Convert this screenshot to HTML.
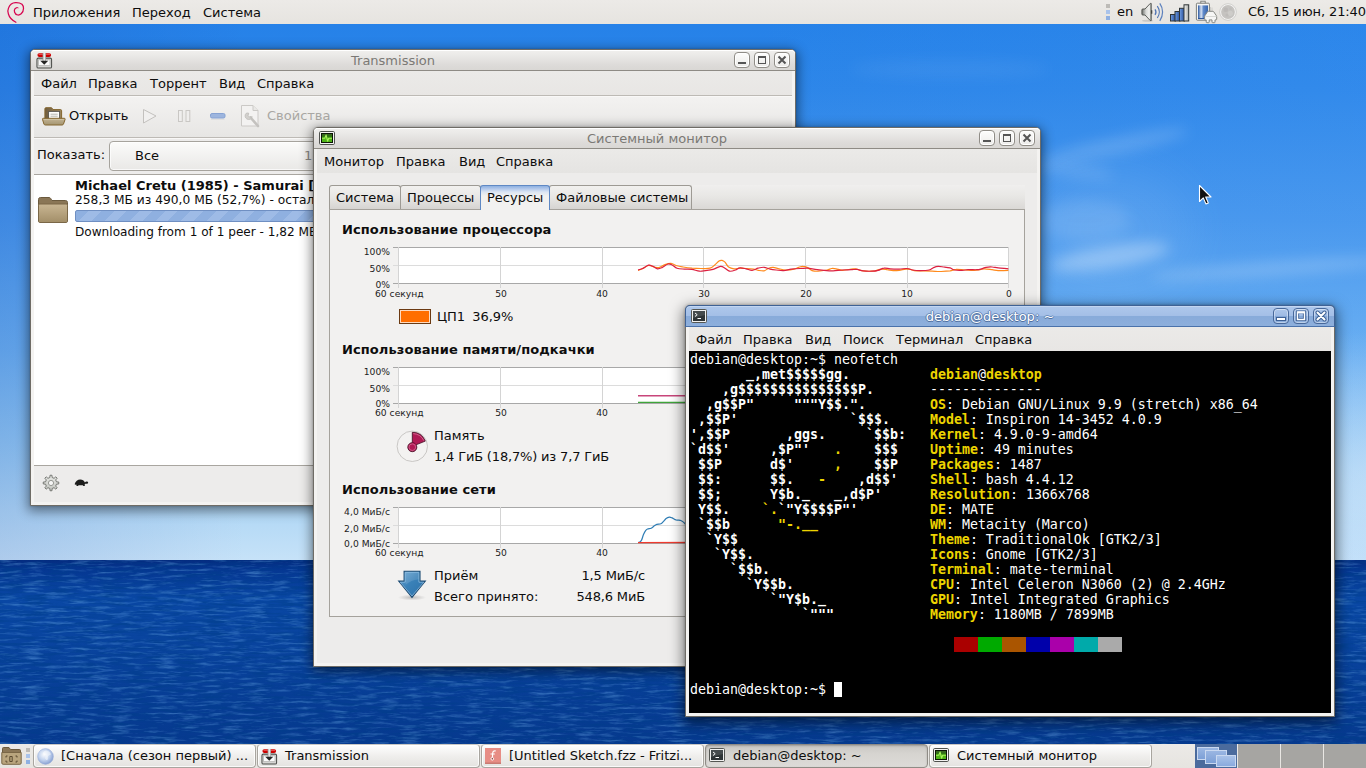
<!DOCTYPE html>
<html lang="ru">
<head>
<meta charset="utf-8">
<title>MATE Desktop</title>
<style>
*{box-sizing:border-box}
html,body{margin:0;padding:0;width:1366px;height:768px;overflow:hidden}
body{position:relative;font-family:"DejaVu Sans","Liberation Sans",sans-serif;font-size:13px;line-height:16px;color:#0d0d0d;background:#0c439e}
.abs,.abs>span,.abs>div,.abs>svg,.abs>pre,.tk>*,.ws>*,.tab>*,.wb>*{position:absolute}
#tt *{position:static}
#tt i{position:relative;top:-1px;font-style:normal}
.t{white-space:nowrap}
/* wallpaper */
#sky{left:0;top:0;width:1366px;height:560px;overflow:hidden;background:
 radial-gradient(ellipse 380px 150px at 1420px 480px,rgba(225,238,250,.55),rgba(225,238,250,0) 100%),
 linear-gradient(90deg,rgba(0,40,150,.12),rgba(0,40,150,0) 18%,rgba(90,170,255,0) 55%,rgba(90,170,255,.12) 100%),
 linear-gradient(180deg,#2380e8 0,#2d86e9 90px,#4796ec 220px,#6baff0 350px,#8fc5f2 440px,#b0d7f5 510px,#c6e2f8 560px)}
.cl{position:absolute;background:#fff;border-radius:50%;filter:blur(7px)}
#sea{left:0;top:560px;width:1366px;height:208px;background:
 linear-gradient(180deg,#042c80 0,#053792 10px,#0947a4 38px,#09449f 80px,#073d95 140px,#06378b 208px)}
#sea svg{position:absolute;left:0;top:0;opacity:.5}
/* panels */
.panel{left:0;width:1366px;height:24px;background:#e9e7e4}
#top{top:0;background:linear-gradient(180deg,#eceae7,#e6e4e0)}
#bottom{top:744px;background:linear-gradient(180deg,#eceae7,#e6e4e0)}
.pm{top:5px;white-space:nowrap}
/* windows */
.win{background:#edeceb;border:1px solid #6f6c66;border-radius:5px 5px 0 0;box-shadow:0 3px 12px 2px rgba(0,0,0,.46),0 0 2px rgba(0,0,0,.25)}
.win::after{content:"";position:absolute;left:0;top:21px;right:0;bottom:0;border:3px solid #f4f3f1;border-top:none}
.tbar{left:0;top:0;right:0;height:21px;border-radius:4px 4px 0 0;background:linear-gradient(180deg,#f1f0ee 0,#e8e7e5 35%,#dddbd9 75%,#d9d7d4 100%);border-bottom:1px solid #8e8b85;box-shadow:inset 0 1px 0 #fff}
.tbar.f{background:linear-gradient(180deg,#aec8ec 0,#a4bfe7 48%,#88abda 52%,#8dafdc 100%);box-shadow:inset 0 1px 0 #c3d6f1}
.win.f{box-shadow:0 4px 14px 2px rgba(0,0,0,.5),0 0 3px rgba(0,0,0,.3)}
.tbar.f{left:-1px;top:-1px;right:-1px;height:22px;border:1px solid #3f6295;border-bottom-color:#4a72ab;border-radius:5px 5px 0 0}
.ttl{left:26px;right:66px;top:3px;text-align:center;color:#7b7975;white-space:nowrap}
.tbar.f .ttl{color:#fff;text-shadow:0 1px 0 #4f6f9f,1px 0 0 #5d7fb0,-1px 0 0 #5d7fb0,0 -1px 0 #6d8fc0}
.wb{top:2px;width:16px;height:16px;border:1px solid #8f8c86;border-radius:4px;background:linear-gradient(180deg,#fdfdfc,#ecebe9);box-shadow:inset 0 0 0 1px #fff}
.tbar.f .wb{border-color:#48699b;background:linear-gradient(180deg,#adc7eb 0,#9fbbe4 48%,#84a7d8 52%,#8eb0dd 100%);box-shadow:inset 0 0 0 1px rgba(255,255,255,.4)}
.wb svg{left:-1px;top:-1px}
.mi{top:0;white-space:nowrap}
.sep{height:1px;left:3px;right:3px;background:#bdbab5;border-bottom:1px solid #f9f8f7;height:2px}
.dim{color:#a9a7a3}
.gl{font-size:9.2px;line-height:11px;white-space:nowrap;color:#222}
.gl.r{text-align:right;width:61px}
.gl.c{text-align:center;width:60px}
.hd{font-weight:bold;white-space:nowrap;letter-spacing:.09px}
.tab{top:57px;height:24px;border:1px solid #9d9a94;border-bottom:none;border-radius:3px 3px 0 0;background:linear-gradient(180deg,#f2f1ef,#e7e6e4 50%,#d6d4d1);white-space:nowrap}
.tab span{left:6px;top:4px}
.tab.on{height:25px;background:linear-gradient(180deg,#8db0e1 0,#b4c9eb 3px,#dce5f3 6px,#f2f1f0 10px);border-color:#5f88c4;z-index:2}
#tt{left:3px;top:45px;width:642px;height:362px;background:#000;margin:0;padding:1px 0 0 1px;color:#fff;font-family:"DejaVu Sans Mono","Liberation Mono",monospace;font-size:13.29px;line-height:15px;white-space:pre;overflow:hidden}
#tt b.y{color:#edd400}
.tk{top:0;width:223px;height:24px;border:1px solid #a8a59f;border-top-color:#c9c7c3;border-radius:4px;background:linear-gradient(180deg,#fefefe,#eeedeb 55%,#e4e3e0);box-shadow:inset 0 0 0 1px rgba(255,255,255,.8);white-space:nowrap;overflow:hidden}
.tk span{left:27px;top:3px}
.tk.on{background:linear-gradient(180deg,#c9c7c3,#d6d4d0 40%,#dddbd8);border-color:#8f8c86;box-shadow:inset 0 1px 2px rgba(0,0,0,.22)}
.ws{top:0;width:42px;height:24px;background:#a6a5a2}
</style>
</head>
<body>
<div id="sky" class="abs">
 <div class="cl" style="left:1040px;top:138px;width:150px;height:16px;opacity:.16;transform:rotate(-12deg)"></div>
 <div class="cl" style="left:1035px;top:165px;width:80px;height:12px;opacity:.14;transform:rotate(6deg)"></div>
 <div class="cl" style="left:1050px;top:246px;width:120px;height:22px;opacity:.30;transform:rotate(-9deg)"></div>
 <div class="cl" style="left:1150px;top:262px;width:240px;height:14px;opacity:.20;transform:rotate(-4deg)"></div>
 <div class="cl" style="left:1040px;top:200px;width:90px;height:40px;opacity:.10"></div>
 <div class="cl" style="left:850px;top:60px;width:200px;height:18px;opacity:.05"></div>
 <div class="cl" style="left:1030px;top:170px;width:160px;height:120px;opacity:.08;filter:blur(25px)"></div>
</div>
<div id="sea" class="abs"><svg width="1366" height="208"><filter id="wv" x="0" y="0" width="100%" height="100%"><feTurbulence type="fractalNoise" baseFrequency="0.045 0.34" numOctaves="4" seed="11"/><feColorMatrix type="matrix" values="0 0 0 0 .2  0 0 0 0 .5  0 0 0 0 .9  1.8 0 0 0 -.88"/></filter><filter id="wd" x="0" y="0" width="100%" height="100%"><feTurbulence type="fractalNoise" baseFrequency="0.04 0.3" numOctaves="4" seed="3"/><feColorMatrix type="matrix" values="0 0 0 0 0  0 0 0 0 .05  0 0 0 0 .25  0 2.6 0 0 -1"/></filter><rect width="1366" height="208" filter="url(#wd)"/><rect width="1366" height="208" filter="url(#wv)"/></svg></div>

<!-- TOP PANEL -->
<div id="top" class="abs panel">
 <svg style="left:0;top:0" width="32" height="24" viewBox="0 0 32 24"><path d="M15.900 22.300C12.500 20.500 9.400 17.500 8.400 14C7.600 11.500 7.800 9.500 8.500 8C9.800 4.800 12.500 2.800 15.500 2.700C18 2.600 20.500 3.200 22 4.300C23.200 5.500 23.600 7 23.500 8.500C23.500 10.500 22.600 12.500 21.200 13.750C20 14.800 18.800 15.100 17.800 15C16 14.700 15 13.600 14.600 12.300C14.200 11 14.200 9.800 14.900 8.800C15.500 8 16.300 7.500 17.200 7.500" fill="none" stroke="#d7064f" stroke-width="1.250" stroke-linecap="round"/><path d="M17.200 7.500c.8 0 1.300.3 1.600.6" fill="none" stroke="#d7064f" stroke-width=".7" stroke-linecap="round" opacity=".6"/></svg>
 <span class="pm" style="left:33px">Приложения</span>
 <span class="pm" style="left:132px">Переход</span>
 <span class="pm" style="left:203px">Система</span>
 <div style="left:1106px;top:4px;width:4px;height:4px;background:#bdbbb7"></div>
 <div style="left:1106px;top:10px;width:4px;height:4px;background:#a9c3eb"></div>
 <div style="left:1106px;top:16px;width:4px;height:4px;background:#8fb0e2"></div>
 <span class="pm" style="left:1117px;top:4px">en</span>
 <!-- speaker -->
 <svg style="left:1140px;top:0" width="26" height="24" viewBox="0 0 26 24"><defs><linearGradient id="spk" x1="0" y1="0" x2="1" y2="0"><stop offset="0" stop-color="#6d6f6b"/><stop offset=".45" stop-color="#d9dad7"/><stop offset=".8" stop-color="#f2f2f0"/><stop offset="1" stop-color="#8b8d88"/></linearGradient></defs><ellipse cx="7.500" cy="20.800" rx="5.500" ry="1" fill="#000" opacity=".12"/><path d="M2.700 9h2.300l5.300-5.600h.9v17.200h-.9L5 15H2.700c-.5 0-.8-.3-.8-.8V9.800c0-.5.300-.8.800-.8z" fill="url(#spk)" stroke="#4d4f4b" stroke-width=".9"/><path d="M11.700 10.300v3.400" stroke="#3c3e3a" stroke-width="1.200"/><path d="M15 9.300c1.200 1.700 1.200 3.900 0 5.600" fill="none" stroke="#4f74b3" stroke-width="1.200"/><path d="M17.300 6.200c2.600 3.500 2.600 8.300 0 11.800" fill="none" stroke="#4f74b3" stroke-width="1.200"/><path d="M19.800 3.400c3.700 5.200 3.700 12.200 0 17.400" fill="none" stroke="#5c80bd" stroke-width="1.200"/></svg>
 <!-- network bars -->
 <svg style="left:1169px;top:0" width="22" height="24" viewBox="0 0 22 24"><defs><linearGradient id="nb" x1="0" y1="0" x2="1" y2="0"><stop offset="0" stop-color="#729fe0"/><stop offset=".5" stop-color="#4a74bd"/><stop offset="1" stop-color="#2d5096"/></linearGradient><linearGradient id="ng" x1="0" y1="0" x2="1" y2="0"><stop offset="0" stop-color="#f6f6f5"/><stop offset="1" stop-color="#a9aaa6"/></linearGradient></defs><rect x="1.500" y="14.500" width="5" height="6.500" fill="url(#nb)" stroke="#2e3436"/><rect x="6" y="11.500" width="5" height="9.500" fill="url(#nb)" stroke="#2e3436"/><rect x="10.500" y="8.300" width="5" height="12.700" fill="url(#nb)" stroke="#2e3436"/><rect x="15" y="4.800" width="4.700" height="16.200" fill="url(#ng)" stroke="#2e3436"/></svg>
 <!-- battery -->
 <svg style="left:1194px;top:0" width="25" height="24" viewBox="0 0 25 24"><defs><linearGradient id="bt" x1="0" y1="0" x2="1" y2="0"><stop offset="0" stop-color="#2a57a0"/><stop offset=".32" stop-color="#d5e1f3"/><stop offset=".55" stop-color="#5f88c8"/><stop offset="1" stop-color="#3563ab"/></linearGradient></defs><rect x="6.800" y="1.200" width="4.400" height="2.500" fill="#f2f2f0" stroke="#6f716c" stroke-width=".8"/><rect x="2.400" y="3.200" width="13" height="17" rx="1" fill="#f6f6f5" stroke="#6f716c" stroke-width=".9"/><rect x="4" y="5.400" width="10" height="13.200" fill="url(#bt)"/><path d="M4 18.600h10" stroke="#1f4a92" stroke-width="1"/><path d="M16.500 7v5M18 7.500v4" stroke="#c6c7c3" stroke-width=".8"/><path d="M14.300 11.300h4.600c.4 0 .7.200.9.600l2.600 3.800c.2.300.3.600.3 1v2.500c0 .4-.3.700-.7.700h-1v2.200c0 .4-.300.600-.7.600h-1.600c-.4 0-.7-.2-.7-.6v-2.200h-2.800v2.200c0 .4-.300.600-.7.600h-1.600c-.4 0-.7-.2-.7-.6v-2.200h-.9c-.4 0-.7-.3-.7-.7v-2.500c0-.4.100-.700.300-1l2.500-3.800c.2-.4.500-.6.900-.6z" fill="#f6f6f5" stroke="#858782" stroke-width="1"/><path d="M11.500 16.500h11" stroke="#cfd0cd" stroke-width=".8"/></svg>
 <!-- moon -->
 <svg style="left:1219px;top:3px" width="18" height="18" viewBox="0 0 18 18"><circle cx="9" cy="9" r="8.300" fill="#f7f6f5" stroke="#c3c1be" stroke-width=".7"/><circle cx="9" cy="9" r="6.900" fill="#c5c3c0"/><circle cx="6.800" cy="6.800" r="2.300" fill="#b5b3b0" opacity=".6"/><circle cx="11.300" cy="10.300" r="2.600" fill="#d2d0cd" opacity=".7"/><circle cx="8" cy="12" r="1.500" fill="#b7b5b2" opacity=".5"/><circle cx="11.500" cy="5.800" r="1.200" fill="#b9b7b4" opacity=".5"/></svg>
 <span class="pm" style="left:1248px;top:4px;letter-spacing:-.1px">Сб, 15 июн, 21:40</span>
</div>

<!-- TRANSMISSION -->
<div id="tr" class="abs win" style="left:30px;top:49px;width:766px;height:457px">
 <div class="abs tbar">
  <svg style="left:5px;top:2px" width="17" height="17" viewBox="0 0 18 18"><defs><linearGradient id="tg" x1="0" y1="0" x2="1" y2="0"><stop offset="0" stop-color="#8f908d"/><stop offset=".5" stop-color="#f6f6f5"/><stop offset="1" stop-color="#9a9b98"/></linearGradient></defs><rect x="1" y="6.500" width="15.500" height="10.500" rx="1.500" fill="#d5d5d3" stroke="#4d4e4b" stroke-width="1.100"/><rect x="2.800" y="8.300" width="12" height="6" fill="#fbfbfb" stroke="#a5a6a3" stroke-width=".6"/><rect x="1.500" y="1.300" width="14.500" height="4" rx="2" fill="#cc0000"/><rect x="2.500" y="1.800" width="12.500" height="1.300" rx=".65" fill="#ef5b5b" opacity=".8"/><rect x="7" y="1" width="3.500" height="9" fill="url(#tg)" stroke="none"/><path d="M4.500 9.300h8.500l-4.250 4.200z" fill="#252524"/></svg>
  <div class="ttl">Transmission</div>
  <div class="wb" style="left:703px"><svg width="16" height="16"><rect x="4" y="10" width="8" height="2" fill="#555"/></svg></div>
  <div class="wb" style="left:723px"><svg width="16" height="16"><path d="M4 4h8v8h-8z M5 6v5h6v-5z" fill="#555" fill-rule="evenodd"/></svg></div>
  <div class="wb" style="left:743px"><svg width="16" height="16"><path d="M4.500 4.500l7 7M11.500 4.500l-7 7" stroke="#555" stroke-width="2" fill="none"/></svg></div>
 </div>
 <!-- menubar -->
 <div class="abs" style="left:0;top:21px;right:0;height:25px;background:linear-gradient(180deg,#ebeae8,#e8e6e4)">
  <span class="mi" style="left:10px;top:5px">Файл</span>
  <span class="mi" style="left:57px;top:5px">Правка</span>
  <span class="mi" style="left:119px;top:5px">Торрент</span>
  <span class="mi" style="left:188px;top:5px">Вид</span>
  <span class="mi" style="left:226px;top:5px">Справка</span>
 </div>
 <div class="abs sep" style="top:45px"></div>
 <!-- toolbar -->
 <div class="abs" style="left:0;top:47px;right:0;height:40px;background:linear-gradient(180deg,#f3f2f1,#e7e6e4)">
  <svg style="left:10px;top:9px" width="26" height="22" viewBox="0 0 26 22"><defs><linearGradient id="fo" x1="0" y1="0" x2="1" y2="0"><stop offset="0" stop-color="#6f5c3e"/><stop offset="1" stop-color="#a08a62"/></linearGradient><linearGradient id="ff" x1="0" y1="0" x2="0" y2="1"><stop offset="0" stop-color="#c4b596"/><stop offset="1" stop-color="#a3946f"/></linearGradient></defs><path d="M3.900 13V2.800c0-.7.400-1.100 1.100-1.100h5.200c.5 0 .8.200 1 .6l.7 1.300h7.600c.7 0 1.100.4 1.100 1.100V13z" fill="url(#fo)" stroke="#84662f" stroke-width="1"/><rect x="7.600" y="5.400" width="11" height="8" fill="#fdfdfc" stroke="#55534e" stroke-width=".9"/><path d="M9.500 8.200h7.200M9.500 10.200h7.200" stroke="#b5b6b0" stroke-width="1"/><path d="M2.300 12.300h21c.7 0 1 .5.800 1.100l-1.600 4.600c-.2.600-.7 1-1.400 1H4.300c-.7 0-1.200-.4-1.400-1l-1.400-4.600c-.2-.6.100-1.100.8-1.100z" fill="url(#ff)" stroke="#84662f" stroke-width="1"/><path d="M2.800 13.400h20" stroke="#ddd2b8" stroke-width=".7" opacity=".8"/></svg>
  <span class="mi" style="left:38px;top:11px">Открыть</span>
  <svg style="left:111px;top:11px" width="16" height="17"><path d="M1.500 1.500l12.500 6.500-12.500 7z" fill="#f1f0ef" stroke="#c3c1be" stroke-width="1"/></svg>
  <svg style="left:147px;top:13px" width="14" height="14"><rect x=".5" y=".5" width="3.800" height="11" fill="#efeeed" stroke="#c9c7c4"/><rect x="8" y=".5" width="3.800" height="11" fill="#efeeed" stroke="#c9c7c4"/></svg>
  <svg style="left:179px;top:16px" width="17" height="8"><rect x=".5" y=".5" width="14.500" height="4.500" rx="1.500" fill="#9db5de" stroke="#86a2d3"/><rect x="1" y="6" width="13.500" height="1" fill="#000" opacity=".05"/></svg>
  <svg style="left:207px;top:7px" width="24" height="24" viewBox="0 0 24 24"><path d="M3.500 1.500h11.500l5 5v15.500h-16.500z" fill="#f3f2f1" stroke="#cbc9c6"/><path d="M15 1.500v5h5" fill="#e9e8e6" stroke="#cbc9c6"/><path d="M12.500 13.500l7.500 8.500" stroke="#c4c2bf" stroke-width="2.600" stroke-linecap="round"/><path d="M8.200 9.300a3.600 3.600 0 1 0 6 3.400l-2.400.6-1.700-1.700.6-2.400a3.600 3.600 0 0 0-2.500.1z" fill="#d2d0cd" stroke="#bdbbb8" stroke-width=".8"/></svg>
  <span class="mi dim" style="left:236px;top:11px">Свойства</span>
 </div>
 <div class="abs sep" style="top:87px"></div>
 <!-- filter row -->
 <span class="abs mi" style="left:6px;top:97px;position:absolute">Показать:</span>
 <div class="abs" style="left:78px;top:91px;width:420px;height:30px;border:1px solid #a6a39d;border-radius:4px;background:linear-gradient(180deg,#fbfbfa,#e9e8e6);box-shadow:inset 0 0 0 1px rgba(255,255,255,.7)">
  <span class="mi" style="left:25px;top:6px">Все</span>
  <span class="mi" style="left:194px;top:6px;color:#8a8884">1</span>
 </div>
 <!-- list -->
 <div class="abs" style="left:2px;top:124px;right:2px;height:292px;background:#fff;border-top:1px solid #a9a6a0;border-bottom:1px solid #a9a6a0">
  <svg style="left:4px;top:21px" width="32" height="28" viewBox="0 0 32 28"><defs><linearGradient id="f2" x1="0" y1="0" x2="0" y2="1"><stop offset="0" stop-color="#c9b693"/><stop offset="1" stop-color="#a28e68"/></linearGradient></defs><path d="M1.500 25V3.500c0-1.200.6-2 2-2h8.500c1 0 1.500.6 2 1.500l.8 1.500h13.700c1.200 0 2 .8 2 2V25z" fill="#8a7656" stroke="#6b5a3e"/><path d="M1.500 9.500c0-1 .6-1.500 1.500-1.500h26c1 0 1.500.5 1.500 1.500V25c0 1-.5 1.500-1.500 1.500H3c-1 0-1.500-.5-1.500-1.500z" fill="url(#f2)" stroke="#7a6747"/></svg>
  <span class="mi" style="left:42px;top:3px;font-weight:bold;font-size:13px">Michael Cretu (1985) - Samurai [MP3]</span>
  <span class="mi" style="left:42px;top:17px;font-size:12.25px">258,3 МБ из 490,0 МБ (52,7%) - осталось 2 мин.</span>
  <div style="left:42px;top:35px;width:700px;height:12px;border:1px solid #6f8fc2;border-radius:2px;background:repeating-linear-gradient(135deg,#8fb0e0 0,#8fb0e0 9px,#9ebbe6 9px,#9ebbe6 18px)"></div>
  <span class="mi" style="left:42px;top:49px;font-size:12.1px">Downloading from 1 of 1 peer - 1,82 МБ/с</span>
 </div>
 <!-- status -->
 <svg class="abs" style="left:11px;top:424px;position:absolute" width="18" height="18" viewBox="0 0 18 18"><defs><linearGradient id="gr" x1="0" y1="0" x2="0" y2="1"><stop offset="0" stop-color="#e9eae7"/><stop offset="1" stop-color="#c3c5c0"/></linearGradient></defs><path d="M7.86 3.52L8.02 1.26L9.98 1.26L10.14 3.52L12.07 4.32L13.78 2.84L15.16 4.22L13.68 5.93L14.48 7.86L16.74 8.02L16.74 9.98L14.48 10.14L13.68 12.07L15.16 13.78L13.78 15.16L12.07 13.68L10.14 14.48L9.98 16.74L8.02 16.74L7.86 14.48L5.93 13.68L4.22 15.16L2.84 13.78L4.32 12.07L3.52 10.14L1.26 9.98L1.26 8.02L3.52 7.86L4.32 5.93L2.84 4.22L4.22 2.84L5.93 4.32ZM11.600 9a2.600 2.600 0 1 0-5.200 0a2.600 2.600 0 1 0 5.200 0z" fill="url(#gr)" fill-rule="evenodd" stroke="none"/><path d="M7.86 3.52L8.02 1.26L9.98 1.26L10.14 3.52L12.07 4.32L13.78 2.84L15.16 4.22L13.68 5.93L14.48 7.86L16.74 8.02L16.74 9.98L14.48 10.14L13.68 12.07L15.16 13.78L13.78 15.16L12.07 13.68L10.14 14.48L9.98 16.74L8.02 16.74L7.86 14.48L5.93 13.68L4.22 15.16L2.84 13.78L4.32 12.07L3.52 10.14L1.26 9.98L1.26 8.02L3.52 7.86L4.32 5.93L2.84 4.22L4.22 2.84L5.93 4.32Z" fill="none" stroke="#777974" stroke-width="1" stroke-linejoin="round"/><circle cx="9" cy="9" r="2.600" fill="#f6f6f5" stroke="#8b8d88" stroke-width=".9"/></svg>
 <svg class="abs" style="left:43px;top:429px;position:absolute" width="15" height="9" viewBox="0 0 15 9"><path d="M.6 5.200C1.500 2.300 3.700.6 6.200.6c2.300 0 4 1.200 4.700 2.900.5-.7 1.300-1.100 2.200-.9.800.2 1.200.8 1 1.400-.2.600-.8.800-1.500.8h-1.300c-.2.400-.4.700-.8 1l.5 1.300H9.300l-.5-.9H4.600l-.6.900H2.300l.5-1.300c-.9-.1-1.700-.3-2.200-.6z" fill="#1c1c1b"/></svg>
</div>

<!-- SYSTEM MONITOR -->
<div id="sm" class="abs win" style="left:313px;top:127px;width:728px;height:540px">
 <div class="abs tbar">
  <svg style="left:5px;top:3px" width="16" height="14" viewBox="0 0 16 14"><rect x=".5" y=".5" width="15" height="13" rx="1.200" fill="#f4f4f3" stroke="#4f514d"/><rect x="2" y="2" width="12" height="10" fill="#0b1405"/><rect x="3" y="3" width="10" height="8" fill="#2f7a10"/><rect x="3" y="6.500" width="10" height="4.500" fill="#4fb318"/><rect x="3" y="3" width="10" height="2" fill="#3a5a2a" opacity=".55"/><path d="M3 7.300h2.800l1.300-3.300 1.500 6.200 1.100-2.900h3.300" fill="none" stroke="#a6f25a" stroke-width="1.100" stroke-linejoin="round"/></svg>
  <div class="ttl">Системный монитор</div>
  <div class="wb" style="left:665px"><svg width="16" height="16"><rect x="4" y="10" width="8" height="2" fill="#555"/></svg></div>
  <div class="wb" style="left:685px"><svg width="16" height="16"><path d="M4 4h8v8h-8z M5 6v5h6v-5z" fill="#555" fill-rule="evenodd"/></svg></div>
  <div class="wb" style="left:705px"><svg width="16" height="16"><path d="M4.500 4.500l7 7M11.500 4.500l-7 7" stroke="#555" stroke-width="2" fill="none"/></svg></div>
 </div>
 <!-- menubar -->
 <div class="abs" style="left:3px;top:21px;right:3px;height:24px;background:linear-gradient(180deg,#ebeae8,#e5e4e2)">
  <span class="mi" style="left:7px;top:5px">Монитор</span>
  <span class="mi" style="left:79px;top:5px">Правка</span>
  <span class="mi" style="left:142px;top:5px">Вид</span>
  <span class="mi" style="left:179px;top:5px">Справка</span>
 </div>
 <!-- notebook -->
 <div class="abs" style="left:15px;top:57px;width:696px;height:25px;background:linear-gradient(180deg,#f0efee,#e8e7e5 45%,#d9d7d4)"></div>
 <div class="abs tab" style="left:15px;width:72px"><span>Система</span></div>
 <div class="abs tab" style="left:86px;width:81px"><span>Процессы</span></div>
 <div class="abs tab on" style="left:166px;width:70px"><span>Ресурсы</span></div>
 <div class="abs tab" style="left:235px;width:143px"><span>Файловые системы</span></div>
 <div class="abs" style="left:15px;top:81px;width:696px;height:408px;background:#f2f1f0;border:1px solid #a5a29c"></div>

 <!-- CPU -->
 <span class="abs hd" style="left:28px;top:94px;position:absolute">Использование процессора</span>
 <span class="abs gl r" style="left:15px;top:118px;position:absolute">100%</span>
 <span class="abs gl r" style="left:15px;top:134.500px;position:absolute">50%</span>
 <span class="abs gl r" style="left:15px;top:150.500px;position:absolute">0%</span>
 <svg class="abs" style="left:78px;top:119px;position:absolute" width="620" height="46" viewBox="-6 0 620 46">
  <rect x="0" y="0" width="611" height="37" fill="#fff"/>
  <path d="M-5 .5h616M-5 36.500h616" stroke="#a8a8a8"/><path d="M-5 18.500h616" stroke="#dcdcdc"/>
  <path d="M.5 0v41M102.500 0v41M204.500 0v41M305.500 0v41M407.500 0v41M509.500 0v41M610.500 0v41" stroke="#d4d4d4"/>
  <path fill="none" stroke="#ff8a1c" stroke-width="1.200" d="M240.0 23.3C240.8 23.1 242.8 22.6 244.5 21.8C246.2 21.0 248.5 18.8 250.5 18.5C252.5 18.2 254.8 19.6 256.5 20.0C258.2 20.4 259.2 21.0 261.0 20.6C262.8 20.2 265.0 18.3 267.0 17.6C269.0 16.9 271.0 16.2 273.0 16.4C275.0 16.6 277.0 18.2 279.0 18.8C281.0 19.4 282.5 19.6 285.0 20.0C287.5 20.4 291.0 20.9 294.0 21.2C297.0 21.4 300.0 21.5 303.0 21.5C306.0 21.5 309.8 21.8 312.0 21.2C314.2 20.6 315.0 19.4 316.5 18.2C318.0 17.0 319.8 14.8 321.0 14.0C322.2 13.2 323.0 13.2 324.0 13.4C325.0 13.6 325.9 14.1 327.0 15.2C328.1 16.3 329.1 18.9 330.6 20.0C332.1 21.1 334.1 21.6 336.0 21.8C337.9 22.0 340.0 21.2 342.0 21.2C344.0 21.1 345.8 21.4 348.1 21.5C350.4 21.6 353.6 21.8 355.6 22.1C357.6 22.4 358.4 23.0 360.1 23.3C361.9 23.6 364.4 24.2 366.1 23.9C367.9 23.5 369.1 21.8 370.6 21.2C372.1 20.6 373.4 20.2 375.1 20.3C376.9 20.4 379.1 21.4 381.1 21.8C383.1 22.2 384.6 22.9 387.1 23.0C389.6 23.1 393.9 22.6 396.1 22.1C398.4 21.7 399.1 20.8 400.6 20.3C402.1 19.9 403.6 19.3 405.1 19.4C406.6 19.4 408.1 19.9 409.6 20.6C411.1 21.3 412.4 23.0 414.1 23.6C415.9 24.2 417.6 24.3 420.1 24.2C422.6 24.1 426.9 23.4 429.1 23.0C431.4 22.6 432.1 21.7 433.6 21.5C435.1 21.3 436.4 21.5 438.1 21.8C439.9 22.1 441.6 23.2 444.1 23.3C446.6 23.4 450.9 22.4 453.1 22.1C455.4 21.9 456.1 21.6 457.6 21.8C459.1 22.0 460.4 22.9 462.1 23.3C463.9 23.7 465.6 24.1 468.1 24.2C470.6 24.3 474.6 24.2 477.1 23.9C479.6 23.5 481.1 22.3 483.1 22.1C485.1 21.9 487.1 22.4 489.1 22.7C491.1 22.9 493.1 23.5 495.1 23.6C497.1 23.7 498.6 23.6 501.1 23.3C503.6 23.0 507.6 21.8 510.1 21.8C512.6 21.9 513.6 23.2 516.1 23.6C518.6 24.0 522.1 23.8 525.1 23.9C528.1 24.0 531.1 24.1 534.1 24.2C537.1 24.3 540.1 24.6 543.1 24.5C546.1 24.4 549.6 24.2 552.1 23.9C554.6 23.5 555.6 22.5 558.1 22.4C560.6 22.2 564.1 22.9 567.1 23.0C570.1 23.1 573.6 23.4 576.1 23.3C578.6 23.2 580.4 22.9 582.1 22.7C583.9 22.4 584.6 21.8 586.6 21.8C588.6 21.8 591.8 22.4 594.1 22.7C596.4 23.0 597.5 23.5 600.2 23.6C602.9 23.7 608.7 23.4 610.4 23.3"/>
  <path fill="none" stroke="#dc2040" stroke-width="1.200" d="M240.0 23.0C240.8 22.8 242.8 22.3 244.5 21.5C246.2 20.7 248.8 18.6 250.5 18.2C252.2 17.8 253.5 18.8 255.0 19.4C256.5 20.0 258.0 21.6 259.5 21.8C261.0 22.0 262.2 21.4 264.0 20.6C265.8 19.8 268.2 17.4 270.0 17.0C271.8 16.6 273.0 17.5 274.5 18.2C276.0 18.9 277.0 20.5 279.0 21.2C281.0 21.9 284.0 21.9 286.5 22.1C289.0 22.3 291.5 22.0 294.0 22.4C296.5 22.8 299.2 24.0 301.5 24.2C303.8 24.4 305.2 23.9 307.5 23.6C309.8 23.3 312.5 23.1 315.0 22.4C317.5 21.7 320.5 19.6 322.5 19.4C324.5 19.2 325.5 20.4 327.0 21.2C328.5 22.0 329.8 23.9 331.5 24.2C333.2 24.5 335.8 23.6 337.5 23.0C339.2 22.4 340.2 21.1 342.0 20.9C343.8 20.7 346.1 21.4 348.1 21.8C350.1 22.2 352.1 23.4 354.1 23.3C356.1 23.2 358.1 21.7 360.1 21.2C362.1 20.7 364.1 20.1 366.1 20.3C368.1 20.5 370.1 21.7 372.1 22.1C374.1 22.6 375.9 22.8 378.1 23.0C380.4 23.2 383.1 23.8 385.6 23.6C388.1 23.5 390.4 22.5 393.1 22.1C395.9 21.8 399.4 21.6 402.1 21.5C404.9 21.4 407.1 21.1 409.6 21.2C412.1 21.3 414.4 22.0 417.1 22.4C419.9 22.8 423.1 23.1 426.1 23.3C429.1 23.6 432.1 23.9 435.1 23.9C438.1 23.8 441.1 23.2 444.1 23.0C447.1 22.8 450.6 22.8 453.1 22.7C455.6 22.6 457.1 22.2 459.1 22.4C461.1 22.6 462.6 23.6 465.1 23.9C467.6 24.2 471.6 24.3 474.1 24.2C476.6 24.1 478.1 23.8 480.1 23.3C482.1 22.8 484.1 21.4 486.1 21.2C488.1 20.9 489.6 21.6 492.1 21.8C494.6 22.0 498.4 22.2 501.1 22.1C503.9 22.1 506.4 21.4 508.6 21.5C510.9 21.6 512.4 22.6 514.6 23.0C516.9 23.4 519.4 23.6 522.1 23.6C524.9 23.6 528.9 23.5 531.1 23.0C533.4 22.5 534.1 21.2 535.6 20.6C537.1 20.0 538.4 19.5 540.1 19.4C541.9 19.3 544.1 19.8 546.1 20.0C548.1 20.2 550.4 20.4 552.1 20.9C553.9 21.4 554.6 22.6 556.6 23.0C558.6 23.4 561.9 23.4 564.1 23.3C566.4 23.2 567.6 22.8 570.1 22.7C572.6 22.6 576.9 22.8 579.1 22.7C581.4 22.6 582.1 22.2 583.6 21.8C585.1 21.4 586.4 20.6 588.1 20.3C589.9 20.0 592.1 19.9 594.1 20.0C596.1 20.1 597.5 20.6 600.2 20.9C602.9 21.2 608.7 21.6 610.4 21.8"/>
 </svg>
 <span class="abs gl c" style="left:55px;top:160px;position:absolute;text-align:left;width:auto;left:61px">60 секунд</span>
 <span class="abs gl c" style="left:157px;top:160px;position:absolute">50</span>
 <span class="abs gl c" style="left:258px;top:160px;position:absolute">40</span>
 <span class="abs gl c" style="left:360px;top:160px;position:absolute">30</span>
 <span class="abs gl c" style="left:462px;top:160px;position:absolute">20</span>
 <span class="abs gl c" style="left:563px;top:160px;position:absolute">10</span>
 <span class="abs gl c" style="left:665px;top:160px;position:absolute">0</span>
 <div class="abs" style="left:85px;top:181px;width:32px;height:15px;border:1px solid #6b3a12;background:#ff6e00;box-shadow:inset 0 0 0 1px rgba(255,255,255,.75)"></div>
 <span class="abs mi" style="left:123px;top:181px;position:absolute">ЦП1<span style="position:static;padding-left:7px">36,9%</span></span>

 <!-- MEM -->
 <span class="abs hd" style="left:28px;top:214px;position:absolute">Использование памяти/подкачки</span>
 <span class="abs gl r" style="left:15px;top:238px;position:absolute">100%</span>
 <span class="abs gl r" style="left:15px;top:255px;position:absolute">50%</span>
 <span class="abs gl r" style="left:15px;top:270px;position:absolute">0%</span>
 <svg class="abs" style="left:78px;top:239px;position:absolute" width="620" height="46" viewBox="-6 0 620 46">
  <rect x="0" y="0" width="611" height="37" fill="#fff"/>
  <path d="M-5 .5h616M-5 36.500h616" stroke="#a8a8a8"/><path d="M-5 18.500h616" stroke="#dcdcdc"/>
  <path d="M.5 0v41M102.500 0v41M204.500 0v41M305.500 0v41M407.500 0v41M509.500 0v41M610.500 0v41" stroke="#d4d4d4"/>
  <path d="M240 28.700h371" stroke="#c8457a" stroke-width="1.400"/><path d="M240 35.400h371" stroke="#3fa53a" stroke-width="1.400"/>
 </svg>
 <span class="abs gl" style="left:61px;top:279px;position:absolute">60 секунд</span>
 <span class="abs gl c" style="left:157px;top:279px;position:absolute">50</span>
 <span class="abs gl c" style="left:258px;top:279px;position:absolute">40</span>
 <svg class="abs" style="left:81px;top:301px;position:absolute" width="34" height="34" viewBox="0 0 34 34"><circle cx="17.300" cy="17.300" r="15.200" fill="#f3f2f1" stroke="#c4c2bf" stroke-width=".9"/><path d="M17.300 17.300V3.300A14 14 0 0 1 30.300 12.100z" fill="#b01a55" stroke="#3d0b1f" stroke-width=".8" stroke-linejoin="round"/><path d="M18.300 4.600A12.700 12.700 0 0 1 28.900 11.700" fill="none" stroke="#e58aac" stroke-width=".8" opacity=".8"/><circle cx="17.300" cy="18.200" r="4.500" fill="#b01a55" stroke="#3d0b1f" stroke-width=".8"/><path d="M17.300 17.300V13.500L21.500 15.600z" fill="#b01a55"/><circle cx="17.300" cy="18.200" r="3.300" fill="none" stroke="#e58aac" stroke-width=".7" opacity=".8"/></svg>
 <span class="abs mi" style="left:120px;top:300px;position:absolute">Память</span>
 <span class="abs mi" style="left:120px;top:321px;position:absolute;letter-spacing:-.17px">1,4 ГиБ (18,7%) из 7,7 ГиБ</span>

 <!-- NET -->
 <span class="abs hd" style="left:28px;top:354px;position:absolute">Использование сети</span>
 <span class="abs gl r" style="left:15px;top:378px;position:absolute">4,0 МиБ/с</span>
 <span class="abs gl r" style="left:15px;top:395px;position:absolute">2,0 МиБ/с</span>
 <span class="abs gl r" style="left:15px;top:410px;position:absolute">0,0 МиБ/с</span>
 <svg class="abs" style="left:78px;top:379px;position:absolute" width="620" height="46" viewBox="-6 0 620 46">
  <rect x="0" y="0" width="611" height="37" fill="#fff"/>
  <path d="M-5 .5h616M-5 36.500h616" stroke="#a8a8a8"/><path d="M-5 18.500h616" stroke="#dcdcdc"/>
  <path d="M.5 0v41M102.500 0v41M204.500 0v41M305.500 0v41M407.500 0v41M509.500 0v41M610.500 0v41" stroke="#d4d4d4"/>
  <path fill="none" stroke="#2e7db5" stroke-width="1.200" d="M240.3 35.4C240.5 35.4 241.0 35.6 241.5 35.2C242.0 34.9 242.8 34.6 243.5 33.3C244.2 32.0 244.8 29.2 245.5 27.6C246.2 26.0 246.9 24.5 247.6 23.6C248.3 22.7 248.7 22.4 249.6 22.0C250.5 21.6 252.1 21.7 253.2 21.2C254.3 20.7 255.5 19.4 256.4 18.8C257.3 18.2 257.7 17.6 258.8 17.3C259.9 17.0 261.8 17.2 262.9 16.8C264.0 16.4 264.4 15.6 265.3 14.7C266.2 13.8 267.1 12.3 268.1 11.5C269.1 10.7 270.3 10.2 271.3 10.1C272.3 10.0 273.0 10.4 274.1 10.9C275.2 11.4 276.9 12.6 278.2 13.0C279.5 13.4 281.0 13.0 282.2 13.3C283.4 13.7 284.5 14.4 285.4 15.1C286.3 15.8 286.5 16.4 287.4 17.2C288.3 17.9 289.4 19.1 291.0 19.6C292.6 20.1 291.9 20.0 296.7 20.4C301.5 20.8 267.6 21.4 320.0 22.0C372.4 22.6 562.5 23.7 611.0 24.0"/>
  <path d="M240 35.600c20-1 60-1 371-1.200" fill="none" stroke="#ef3b2f" stroke-width="1.400"/>
 </svg>
 <span class="abs gl" style="left:61px;top:419px;position:absolute">60 секунд</span>
 <span class="abs gl c" style="left:157px;top:419px;position:absolute">50</span>
 <span class="abs gl c" style="left:258px;top:419px;position:absolute">40</span>
 <svg class="abs" style="left:83px;top:442px;position:absolute" width="30" height="31" viewBox="0 0 30 31"><defs><linearGradient id="ar" x1="0" y1="0" x2="1" y2="1"><stop offset="0" stop-color="#6da7d3"/><stop offset=".45" stop-color="#3a81b8"/><stop offset="1" stop-color="#2a70a8"/></linearGradient><radialGradient id="as" cx=".5" cy=".5" r=".5"><stop offset="0" stop-color="#000" stop-opacity=".22"/><stop offset="1" stop-color="#000" stop-opacity="0"/></radialGradient></defs><ellipse cx="15" cy="27.500" rx="14" ry="3" fill="url(#as)"/><path d="M7.100 1.300h15.900v9.800h5.300L15 27.400 1.700 11.100h5.400z" fill="url(#ar)" stroke="#1b4a72" stroke-width="1.100" stroke-linejoin="miter"/><path d="M8.200 2.400h13.700v9.800h4.900L15 26 3.200 12.200h5z" fill="none" stroke="#a4cdec" stroke-width=".8" opacity=".75"/><path d="M8.600 2.800h13v6.500c-5 .5-9.500 2.500-13 5.500z" fill="#fff" opacity=".12"/></svg>
 <span class="abs mi" style="left:120px;top:440px;position:absolute">Приём</span>
 <span class="abs mi" style="left:231px;width:100px;text-align:right;top:440px;position:absolute;letter-spacing:-.15px">1,5 МиБ/с</span>
 <span class="abs mi" style="left:120px;top:461px;position:absolute">Всего принято:</span>
 <span class="abs mi" style="left:231px;width:100px;text-align:right;top:461px;position:absolute;letter-spacing:-.15px">548,6 МиБ</span>
</div>

<!-- TERMINAL -->
<div id="te" class="abs win f" style="left:685px;top:305px;width:650px;height:412px">
 <div class="abs tbar f">
  <svg style="left:5px;top:3px" width="16" height="14" viewBox="0 0 16 14"><rect x=".5" y=".5" width="15" height="13" rx="1" fill="#f1f1f0" stroke="#555753"/><rect x="2" y="2" width="12" height="10" fill="#2e3436"/><path d="M2 2h12v4l-12 3z" fill="#555b5d" opacity=".6"/><path d="M4 4l2.200 1.700L4 7.500" fill="none" stroke="#fff" stroke-width="1"/><path d="M6.500 9.500h3.500" stroke="#fff" stroke-width="1"/></svg>
  <div class="ttl">debian@desktop: ~</div>
  <div class="wb" style="left:587px"><svg width="16" height="16"><rect x="3.500" y="9.500" width="9" height="3" fill="#fff" stroke="#3f6295"/></svg></div>
  <div class="wb" style="left:607px"><svg width="16" height="16"><path d="M4.500 4h7v7.500h-7z" fill="none" stroke="#3f6295" stroke-width="3.200"/><path d="M4.500 4h7v7.500h-7z" fill="none" stroke="#fff" stroke-width="1.400"/><path d="M4.500 4.500h7" stroke="#fff" stroke-width="1.800"/></svg></div>
  <div class="wb" style="left:627px"><svg width="16" height="16"><path d="M4.500 4.500l7 7M11.500 4.500l-7 7" stroke="#3f6295" stroke-width="4" stroke-linecap="round" fill="none"/><path d="M4.500 4.500l7 7M11.500 4.500l-7 7" stroke="#fff" stroke-width="2" stroke-linecap="round" fill="none"/></svg></div>
 </div>
 <div class="abs" style="left:0;top:21px;right:0;height:24px;background:linear-gradient(180deg,#ebeae8,#e8e6e4)">
  <span class="mi" style="left:10px;top:5px">Файл</span>
  <span class="mi" style="left:57px;top:5px">Правка</span>
  <span class="mi" style="left:119px;top:5px">Вид</span>
  <span class="mi" style="left:157px;top:5px">Поиск</span>
  <span class="mi" style="left:210px;top:5px">Терминал</span>
  <span class="mi" style="left:289px;top:5px">Справка</span>
 </div>
 <pre id="tt" class="abs">debian@desktop:~$ neofetch
<b>       <i>_</i>,met$$$$$gg.</b>          <b class="y">debian</b>@<b class="y">desktop</b>
<b>    ,g$$$$$$$$$$$$$$$P.</b>       --------------
<b>  ,g$$P"     """Y$$.".</b>        <b class="y">OS</b>: Debian GNU/Linux 9.9 (stretch) x86_64
<b> ,$$P'              `$$$.</b>     <b class="y">Model</b>: Inspiron 14-3452 4.0.9
<b>',$$P       ,ggs.     `$$b:</b>   <b class="y">Kernel</b>: 4.9.0-9-amd64
<b>`d$$'     ,$P"'   </b><b class="y">.</b><b>    $$$</b>    <b class="y">Uptime</b>: 49 minutes
<b> $$P      d$'     </b><b class="y">,</b><b>    $$P</b>    <b class="y">Packages</b>: 1487
<b> $$:      $$.   </b><b class="y">-</b><b>    ,d$$'</b>    <b class="y">Shell</b>: bash 4.4.12
<b> $$;      Y$b.<i>_</i>   <i>_</i>,d$P'</b>      <b class="y">Resolution</b>: 1366x768
<b> Y$$.    </b><b class="y">`.</b><b>`"Y$$$$P"'</b>         <b class="y">DE</b>: MATE
<b> `$$b      </b><b class="y">"-.<i>__</i></b>              <b class="y">WM</b>: Metacity (Marco)
<b>  `Y$$</b>                        <b class="y">Theme</b>: TraditionalOk [GTK2/3]
<b>   `Y$$.</b>                      <b class="y">Icons</b>: Gnome [GTK2/3]
<b>     `$$b.</b>                    <b class="y">Terminal</b>: mate-terminal
<b>       `Y$$b.</b>                 <b class="y">CPU</b>: Intel Celeron N3060 (2) @ 2.4GHz
<b>          `"Y$b.<i>_</i></b>             <b class="y">GPU</b>: Intel Integrated Graphics
<b>              `"""</b>            <b class="y">Memory</b>: 1180MB / 7899MB

                                 <span style="background:#aa0000">   </span><span style="background:#00aa00">   </span><span style="background:#aa5500">   </span><span style="background:#0000aa">   </span><span style="background:#aa00aa">   </span><span style="background:#00aaaa">   </span><span style="background:#aaaaaa">   </span>


debian@desktop:~$ <span style="background:#fff"> </span></pre>
</div>

<!-- BOTTOM PANEL -->
<div id="bottom" class="abs panel">
 <svg style="left:1px;top:2px" width="21" height="20" viewBox="0 0 21 20"><path d="M1.500 17V2.500c0-.6.400-1 1-1h5.500l1.500 2h9c.6 0 1 .4 1 1V17z" fill="#8a7656" stroke="#6b5a3e"/><path d="M.8 6.500h19.400v10.500c0 .8-.5 1.300-1.300 1.300H2.100c-.8 0-1.300-.5-1.300-1.300z" fill="#b9a57e" stroke="#7a6747"/><path d="M6.500 10h-1.500v1.500M14.500 10h1.500v1.500M6.500 16h-1.500v-1.500M14.500 16h1.500v-1.500" fill="none" stroke="#5b4a30" stroke-width="1"/><path d="M8.800 10.500h2.400v5h-2.400z" fill="none" stroke="#5b4a30" stroke-width="1"/></svg>
 <div style="left:26px;top:4px;width:4px;height:4px;background:#bdbbb7"></div>
 <div style="left:26px;top:10px;width:4px;height:4px;background:#a9c3eb"></div>
 <div style="left:26px;top:16px;width:4px;height:4px;background:#8fb0e2"></div>
 <div class="tk" style="left:33px"><svg style="left:3px;top:3px" width="17" height="17" viewBox="0 0 17 17"><defs><radialGradient id="gb" cx=".42" cy=".38" r=".7"><stop offset="0" stop-color="#fbfcfe"/><stop offset=".5" stop-color="#c3d3ee"/><stop offset="1" stop-color="#7893cb"/></radialGradient></defs><circle cx="8.500" cy="8.500" r="7.900" fill="url(#gb)" stroke="#9fb3da" stroke-width=".5"/><path d="M9.500 2.500c2 .3 3.800 1.800 4.500 3.700-.8 1.200-2.300.8-3 2-.6 1.200.5 2.300-.4 3.500-1 .8-2.200-.2-2.400-1.300-.2-1.200.8-2.200.2-3.400-.6-1-2.200-.6-2.600-1.800.4-1.500 2-2.600 3.700-2.700z" fill="#fff" opacity=".45"/></svg><span>[Сначала (сезон первый) ...</span></div>
 <div class="tk" style="left:257px"><svg style="left:3px;top:3px" width="17" height="17" viewBox="0 0 18 18"><rect x="1" y="6.500" width="15.500" height="10.500" rx="1.500" fill="#d5d5d3" stroke="#4d4e4b" stroke-width="1.100"/><rect x="2.800" y="8.300" width="12" height="6" fill="#fbfbfb" stroke="#a5a6a3" stroke-width=".6"/><rect x="1.500" y="1.300" width="14.500" height="4" rx="2" fill="#cc0000"/><rect x="2.500" y="1.800" width="12.500" height="1.300" rx=".65" fill="#ef5b5b" opacity=".8"/><rect x="7" y="1" width="3.500" height="9" fill="url(#tg)" stroke="none"/><path d="M4.500 9.300h8.500l-4.250 4.200z" fill="#252524"/></svg><span>Transmission</span></div>
 <div class="tk" style="left:481px"><svg style="left:3px;top:3px" width="16" height="16" viewBox="0 0 16 16"><rect x="0" y="0" width="16" height="16" fill="#e78d85"/><rect x="0" y="14.500" width="16" height="1.500" fill="#c87a72"/><path d="M10.800 3c-2-.5-3 .5-3.100 2.200l-.3 4.600M5.500 6h4.300" fill="none" stroke="#fff" stroke-width="1.200"/><circle cx="7.300" cy="10.800" r="1.300" fill="#8d4a45" stroke="#fff" stroke-width="1"/></svg><span>[Untitled Sketch.fzz - Fritzi...</span></div>
 <div class="tk on" style="left:705px"><svg style="left:3px;top:3px" width="16" height="14" viewBox="0 0 16 14"><rect x=".5" y=".5" width="15" height="13" rx="1" fill="#f1f1f0" stroke="#555753"/><rect x="2" y="2" width="12" height="10" fill="#2e3436"/><path d="M2 2h12v4l-12 3z" fill="#555b5d" opacity=".6"/><path d="M4 4l2.200 1.700L4 7.500" fill="none" stroke="#fff" stroke-width="1"/><path d="M6.500 9.500h3.500" stroke="#fff" stroke-width="1"/></svg><span>debian@desktop: ~</span></div>
 <div class="tk" style="left:929px"><svg style="left:3px;top:3px" width="16" height="14" viewBox="0 0 16 14"><rect x=".5" y=".5" width="15" height="13" rx="1.200" fill="#f4f4f3" stroke="#4f514d"/><rect x="2" y="2" width="12" height="10" fill="#0b1405"/><rect x="3" y="3" width="10" height="8" fill="#2f7a10"/><rect x="3" y="6.500" width="10" height="4.500" fill="#4fb318"/><rect x="3" y="3" width="10" height="2" fill="#3a5a2a" opacity=".55"/><path d="M3 7.300h2.800l1.300-3.300 1.500 6.200 1.100-2.900h3.300" fill="none" stroke="#a6f25a" stroke-width="1.100" stroke-linejoin="round"/></svg><span>Системный монитор</span></div>
 <div class="ws" style="left:1195px;background:#4b6b9d">
  <div style="left:2px;top:3px;width:22px;height:13px;background:linear-gradient(180deg,#9ab6e2,#7c9fd6);border:1px solid #c9d8f0"></div>
  <div style="left:10px;top:6px;width:22px;height:14px;background:linear-gradient(180deg,#9ab6e2,#7c9fd6);border:1px solid #c9d8f0"></div>
  <div style="left:21px;top:11px;width:20px;height:12px;background:linear-gradient(180deg,#a9c2e8,#8aaade);border:1px solid #c9d8f0"></div>
 </div>
 <div class="ws" style="left:1238px"></div>
 <div class="ws" style="left:1281px"></div>
 <div class="ws" style="left:1324px"></div>
</div>
<!-- cursor -->
<svg class="abs" style="left:1198px;top:184px;position:absolute" width="14" height="22" viewBox="0 0 14 22"><path d="M1.500 1.500v16l3.800-3.600 2.600 6 2.400-1-2.600-5.900h5.300z" fill="#111" stroke="#fff" stroke-width="1.100" stroke-linejoin="round"/></svg>
</body>
</html>
